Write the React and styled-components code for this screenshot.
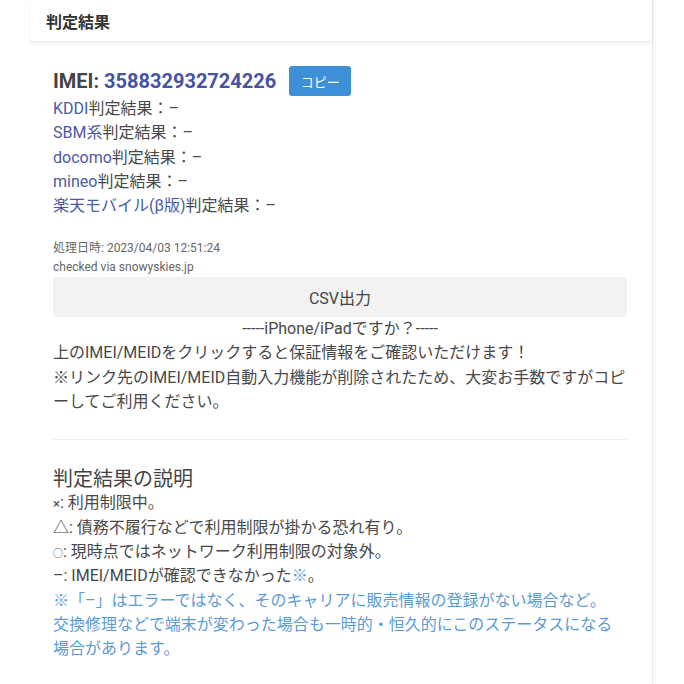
import React from 'react';
import styled, { createGlobalStyle } from 'styled-components';

const GlobalStyle = createGlobalStyle`
  body {
    margin: 0;
    background: #fff;
    font-family: Roboto, "Noto Sans CJK JP", sans-serif;
    color: #484848;
  }
`;

const Card = styled.div`
  margin-left: 30px;
  width: 622px;
  min-height: 684px;
  background: #fff;
  border-right: 1px solid #e9e9e9;
  box-shadow: 2px 0 3px rgba(0, 0, 0, 0.03);
`;

const Header = styled.div`
  height: 42px;
  display: flex;
  align-items: center;
  padding-left: 16px;
  font-size: 16px;
  font-weight: 700;
  color: #333;
  box-shadow: 0 2px 3px rgba(0, 0, 0, 0.06);
  border-bottom: 1px solid #eee;
  box-sizing: border-box;
`;

const Body = styled.div`
  padding: 24px 25px 0 23px;
`;

const ImeiRow = styled.div`
  display: flex;
  align-items: center;
  gap: 13px;
  height: 30px;
  margin-bottom: 1px;
`;

const ImeiLabel = styled.span`
  font-size: 20px;
  font-weight: 700;
  color: #444;
`;

const ImeiNumber = styled.a`
  color: #4653a2;
  text-decoration: none;
`;

const CopyButton = styled.button`
  width: 62px;
  height: 30px;
  border: none;
  border-radius: 3px;
  background: #3d8fd8;
  color: #fff;
  font-family: inherit;
  font-size: 13px;
  padding: 0;
`;

const ResultList = styled.div`
  font-size: 16px;
  line-height: 24.3px;
`;

const Carrier = styled.a`
  color: #4a5aa6;
  text-decoration: none;
`;

const Meta = styled.div`
  margin-top: 21px;
  font-size: 12px;
  line-height: 19px;
  color: #666;
`;

const CsvButton = styled.div`
  height: 40px;
  border-radius: 4px;
  background: #f2f2f2;
  display: flex;
  align-items: center;
  justify-content: center;
  font-size: 16px;
  color: #444;
`;

const Centered = styled.div`
  text-align: center;
  font-size: 16px;
  line-height: 24px;
`;

const Para = styled.p`
  margin: 0;
  font-size: 16px;
  line-height: 24.3px;
`;

const Divider = styled.hr`
  border: none;
  border-top: 1px solid #eee;
  margin: 25px 0 27px;
`;

const SubTitle = styled.h3`
  margin: 0;
  font-size: 20px;
  font-weight: 400;
  line-height: 24px;
  color: #444;
`;

const Legend = styled.div`
  font-size: 16px;
  line-height: 24.3px;
`;

const Note = styled.div`
  height: ${(p) => (p.$blue ? 'auto' : '24.3px')};
  color: ${(p) => (p.$blue ? '#5a9ad6' : 'inherit')};
`;

const Mark = styled.span`
  font-size: ${(p) => p.$size || '16px'};
  line-height: 0;
  color: ${(p) => p.$color || 'inherit'};
`;

const carriers = ['KDDI', 'SBM系', 'docomo', 'mineo', '楽天モバイル(β版)'];

export default function App() {
  return (
    <>
      <GlobalStyle />
      <Card>
        <Header>判定結果</Header>
        <Body>
          <ImeiRow>
            <ImeiLabel>
              IMEI: <ImeiNumber href="#">358832932724226</ImeiNumber>
            </ImeiLabel>
            <CopyButton>コピー</CopyButton>
          </ImeiRow>
          <ResultList>
            {carriers.map((c) => (
              <div key={c}>
                <Carrier href="#">{c}</Carrier>判定結果：–
              </div>
            ))}
          </ResultList>
          <Meta>
            <div>処理日時: 2023/04/03 12:51:24</div>
            <div>checked via snowyskies.jp</div>
          </Meta>
          <CsvButton>CSV出力</CsvButton>
          <Centered>-----iPhone/iPadですか？-----</Centered>
          <Para>上のIMEI/MEIDをクリックすると保証情報をご確認いただけます！</Para>
          <Para>※リンク先のIMEI/MEID自動入力機能が削除されたため、大変お手数ですがコピーしてご利用ください。</Para>
          <Divider />
          <SubTitle>判定結果の説明</SubTitle>
          <Legend>
            <Note><Mark $size="13px">×</Mark>: 利用制限中。</Note>
            <Note>△: 債務不履行などで利用制限が掛かる恐れ有り。</Note>
            <Note><Mark $size="10px">○</Mark>: 現時点ではネットワーク利用制限の対象外。</Note>
            <Note>
              –: IMEI/MEIDが確認できなかった<Mark $color="#5a9ad6">※</Mark>。
            </Note>
            <Note $blue>
              ※「–」はエラーではなく、そのキャリアに販売情報の登録がない場合など。
              <br />
              交換修理などで端末が変わった場合も一時的・恒久的にこのステータスになる場合があります。
            </Note>
          </Legend>
        </Body>
      </Card>
    </>
  );
}
